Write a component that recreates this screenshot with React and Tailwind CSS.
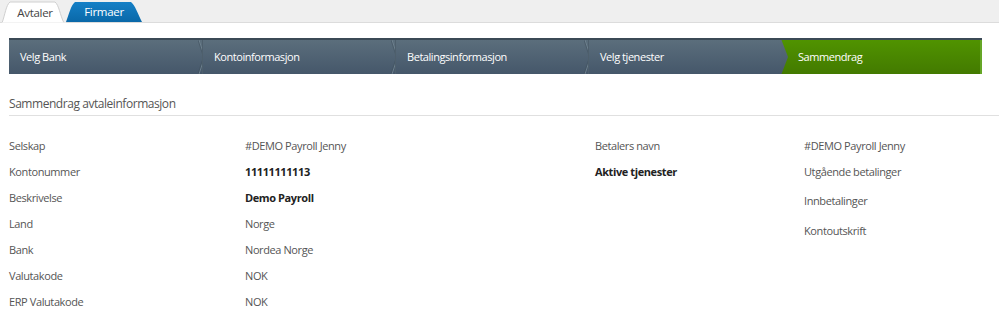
import React from "react";

const font = { fontFamily: '"Open Sans", "Noto Sans", sans-serif' };

function Chevron({ filled }) {
  if (filled) {
    return (
      <svg className="absolute left-0 top-0 h-full w-[8px]" viewBox="0 0 8 35" preserveAspectRatio="none">
        <defs>
          <linearGradient id="gg" x1="0" y1="0" x2="0" y2="1">
            <stop offset="0" stopColor="#5a6d7b" />
            <stop offset="1" stopColor="#45576a" />
          </linearGradient>
        </defs>
        <polygon points="0,0 0.5,0 7,17.5 0.5,35 0,35" fill="url(#gg)" />
      </svg>
    );
  }
  return (
    <svg className="absolute right-[-4px] top-0 h-full w-[8px]" viewBox="0 0 8 35" preserveAspectRatio="none">
      <polyline points="1,0 6.5,17.5 1,35" fill="none" stroke="#6f818e" strokeWidth="1" />
      <polyline points="0,0 5.5,17.5 0,35" fill="none" stroke="#3e4e5b" strokeWidth="1" opacity="0.5" />
    </svg>
  );
}

const steps = ["Velg Bank", "Kontoinformasjon", "Betalingsinformasjon", "Velg tjenester"];

const leftRows = [
  ["Selskap", "#DEMO Payroll Jenny", false],
  ["Kontonummer", "11111111113", true],
  ["Beskrivelse", "Demo Payroll", true],
  ["Land", "Norge", false],
  ["Bank", "Nordea Norge", false],
  ["Valutakode", "NOK", false],
  ["ERP Valutakode", "NOK", false],
];

export default function App() {
  return (
    <div className="w-[999px] h-[333px] bg-white overflow-hidden text-[#444]" style={font}>
      {/* Tab bar */}
      <div className="h-[23px] bg-[#efefef] border-b border-[#dcdcdc] flex items-end pl-[2px]">
        <div className="relative h-[22px] w-[64px] mb-[-1px] flex items-center justify-center text-[11.5px] tracking-[-0.3px] text-[#444]">
          <svg className="absolute inset-0 h-full w-full" viewBox="0 0 64 22" preserveAspectRatio="none">
            <path d="M0,22 C3,14 4,4 8,1 L53,1 C57,4 58,14 62,22 Z" fill="#ffffff" stroke="#d0d0d0" strokeWidth="1" />
            <rect x="0" y="21.5" width="64" height="1" fill="#ffffff" />
          </svg>
          <span className="relative pt-[2px] pl-[2px]">Avtaler</span>
        </div>
        <div className="relative h-[20px] w-[78px] flex items-center justify-center text-[11.5px] tracking-[-0.3px] text-white">
          <svg className="absolute inset-0 h-full w-full" viewBox="0 0 78 20" preserveAspectRatio="none">
            <defs>
              <linearGradient id="bt" x1="0" y1="0" x2="0" y2="1">
                <stop offset="0" stopColor="#1580c6" />
                <stop offset="1" stopColor="#0a68a8" />
              </linearGradient>
            </defs>
            <path d="M0,20 C3,12 5,3 9,0 L65,0 C69,3 72,12 76,20 Z" fill="url(#bt)" />
          </svg>
          <span className="relative pr-[2px]">Firmaer</span>
        </div>
      </div>

      {/* Steps */}
      <div className="mx-[9px] mt-[15px] w-[973px] h-[36px] flex border-t-2 border-[#3b4a56] text-[11px] tracking-[-0.45px]">
        {steps.map((s, i) => (
          <div
            key={s}
            className="relative w-[193px] h-full flex items-center pl-[11px] text-white bg-gradient-to-b from-[#5b6e7c] to-[#45576a] border-l border-[#4e5f6c] first:border-l-0"
          >
            <span>{s}</span>
            {i < steps.length - 1 && <Chevron />}
          </div>
        ))}
        <div className="relative flex-1 h-full flex items-center pl-[17px] text-white bg-gradient-to-b from-[#509300] to-[#437a00] border-r-2 border-[#65a626]">
          <Chevron filled />
          <span className="relative">Sammendrag</span>
        </div>
      </div>

      {/* Heading */}
      <div className="ml-[9px] mt-[22px] pb-[3px] border-b border-[#e0e0e0] text-[12px] tracking-[-0.45px] leading-[16px] text-[#555]">
        Sammendrag avtaleinformasjon
      </div>

      {/* Details */}
      <div className="flex mt-[21px] text-[11px] tracking-[-0.4px] text-[#555]">
        <div className="w-[595px] pl-[9px] flex flex-col gap-[8px]">
          {leftRows.map(([l, v, b]) => (
            <div key={l} className="flex h-[18px] items-center">
              <div className="w-[236px]">{l}</div>
              <div className={b ? "font-bold text-[#222]" : ""}>{v}</div>
            </div>
          ))}
        </div>
        <div className="flex">
          <div className="w-[209px] flex flex-col gap-[8px]">
            <div className="h-[18px] flex items-center">Betalers navn</div>
            <div className="h-[18px] flex items-center font-bold text-[#222]">Aktive tjenester</div>
          </div>
          <div className="flex flex-col">
            <div className="h-[18px] flex items-center">#DEMO Payroll Jenny</div>
            <div className="h-[18px] mt-[8px] flex items-center">Utgående betalinger</div>
            <div className="h-[18px] mt-[11px] flex items-center">Innbetalinger</div>
            <div className="h-[18px] mt-[12px] flex items-center">Kontoutskrift</div>
          </div>
        </div>
      </div>
    </div>
  );
}
